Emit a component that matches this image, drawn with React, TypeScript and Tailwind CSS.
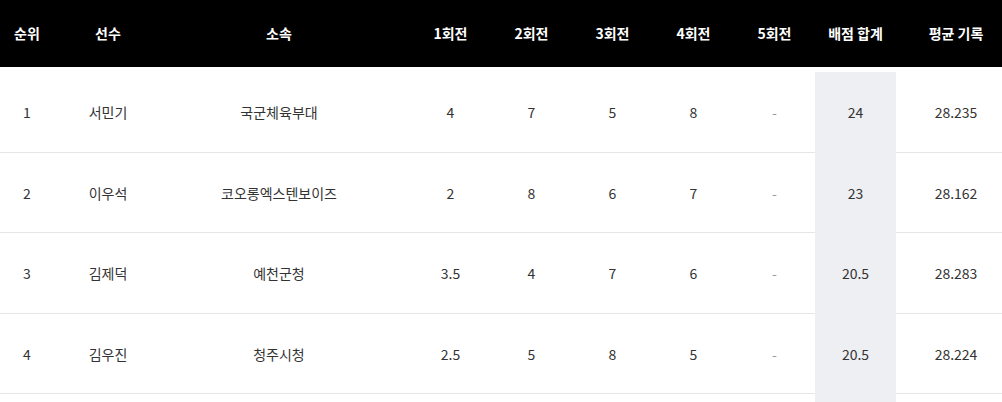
const heads = ["순위", "선수", "소속", "1회전", "2회전", "3회전", "4회전", "5회전", "배점 합계", "평균 기록"];

const rows = [
  ["1", "서민기", "국군체육부대", "4", "7", "5", "8", "-", "24", "28.235"],
  ["2", "이우석", "코오롱엑스텐보이즈", "2", "8", "6", "7", "-", "23", "28.162"],
  ["3", "김제덕", "예천군청", "3.5", "4", "7", "6", "-", "20.5", "28.283"],
  ["4", "김우진", "청주시청", "2.5", "5", "8", "5", "-", "20.5", "28.224"],
];

const cols = "grid grid-cols-[54px_108px_248px_81px_81px_81px_81px_81px_81px_1fr]";

function cellClass(i: number) {
  if (i === 2) return "pr-[14px]";
  if (i === 9) return "pl-[14px]";
  return "";
}

export default function App() {
  return (
    <div className="w-[1002px] h-[402px] overflow-hidden bg-white font-['Noto_Sans_CJK_KR','Noto_Sans',sans-serif]">
      <div className={`${cols} h-[67px] bg-black text-white text-[14px] font-bold`}>
        {heads.map((h, i) => (
          <div key={h} className={`flex items-center justify-center ${cellClass(i)}`}>
            {h}
          </div>
        ))}
      </div>
      <div className="pt-[5px]">
        {rows.map((r) => (
          <div key={r[0]} className={`${cols} h-[80.6px] border-b border-[#e6e6e6] text-[14px] text-[#333]`}>
            {r.map((c, i) => (
              <div
                key={i}
                className={`flex items-center justify-center ${cellClass(i)} ${
                  i === 8 ? "h-[81px] bg-[#eeeff2]" : ""
                } ${c === "-" ? "text-[#999]" : ""}`}
              >
                {c}
              </div>
            ))}
          </div>
        ))}
        <div className={`${cols} h-[20px]`}>
          <div className="col-start-9 bg-[#eeeff2]" />
        </div>
      </div>
    </div>
  );
}
